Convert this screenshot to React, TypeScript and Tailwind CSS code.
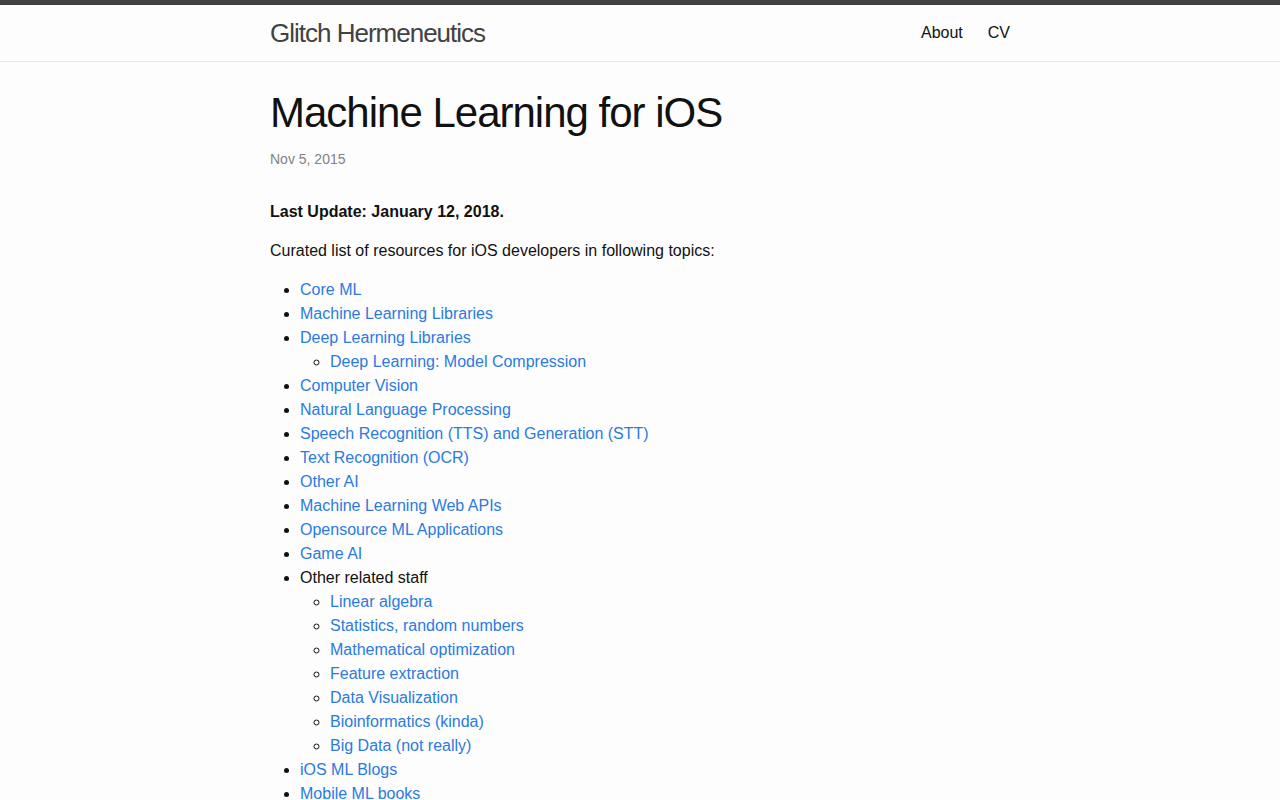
const topics: { label: string; link?: boolean; children?: string[] }[] = [
  { label: "Core ML", link: true },
  { label: "Machine Learning Libraries", link: true },
  {
    label: "Deep Learning Libraries",
    link: true,
    children: ["Deep Learning: Model Compression"],
  },
  { label: "Computer Vision", link: true },
  { label: "Natural Language Processing", link: true },
  { label: "Speech Recognition (TTS) and Generation (STT)", link: true },
  { label: "Text Recognition (OCR)", link: true },
  { label: "Other AI", link: true },
  { label: "Machine Learning Web APIs", link: true },
  { label: "Opensource ML Applications", link: true },
  { label: "Game AI", link: true },
  {
    label: "Other related staff",
    children: [
      "Linear algebra",
      "Statistics, random numbers",
      "Mathematical optimization",
      "Feature extraction",
      "Data Visualization",
      "Bioinformatics (kinda)",
      "Big Data (not really)",
    ],
  },
  { label: "iOS ML Blogs", link: true },
  { label: "Mobile ML books", link: true },
  { label: "GPU Computing Blogs", link: true },
  { label: "Learn Machine Learning", link: true },
  { label: "Other Lists", link: true },
];

export default function App() {
  return (
    <div className="min-h-screen bg-[#fdfdfd] text-[#111111] font-['Liberation_Sans',Arial,sans-serif] text-base leading-6">
      {/* Site header */}
      <header className="border-t-[5px] border-t-[#424242] border-b border-b-[#e8e8e8] min-h-[56px]">
        <div className="max-w-[800px] mx-auto px-[30px] flex items-center justify-between">
          <a href="#" className="text-[26px] leading-[56px] tracking-[-1px] text-[#424242] font-light">
            Glitch Hermeneutics
          </a>
          <nav className="flex leading-[56px]">
            <a href="#" className="text-[#111111] mr-[25px]">
              About
            </a>
            <a href="#" className="text-[#111111]">
              CV
            </a>
          </nav>
        </div>
      </header>

      {/* Post */}
      <main className="py-[30px]">
        <div className="max-w-[800px] mx-auto px-[30px]">
          <header className="mb-[30px]">
            <h1 className="text-[42px] leading-none tracking-[-1px] mb-[15px]">
              Machine Learning for iOS
            </h1>
            <p className="text-sm leading-[21px] text-[#828282]">Nov 5, 2015</p>
          </header>

          <div>
            <p className="mb-[15px]">
              <strong className="font-bold">Last Update: January 12, 2018.</strong>
            </p>
            <p className="mb-[15px]">
              Curated list of resources for iOS developers in following topics:
            </p>
            <ul className="ml-[30px] list-disc mb-[15px]">
              {topics.map((t) => (
                <li key={t.label}>
                  {t.link ? (
                    <a href="#" className="text-[#2a7ae2]">
                      {t.label}
                    </a>
                  ) : (
                    t.label
                  )}
                  {t.children && (
                    <ul className="ml-[30px] list-[circle]">
                      {t.children.map((c) => (
                        <li key={c}>
                          <a href="#" className="text-[#2a7ae2]">
                            {c}
                          </a>
                        </li>
                      ))}
                    </ul>
                  )}
                </li>
              ))}
            </ul>
          </div>
        </div>
      </main>
    </div>
  );
}
